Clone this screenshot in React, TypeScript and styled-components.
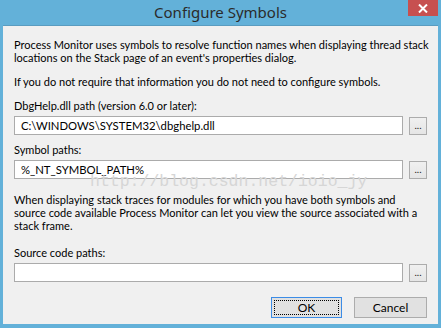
import React from 'react';
import styled, { createGlobalStyle } from 'styled-components';

const GlobalStyle = createGlobalStyle`
  html, body {
    margin: 0;
    padding: 0;
    background: #63b1d9;
  }
`;

const Window = styled.div`
  position: relative;
  width: 441px;
  height: 328px;
  background: #63b1d9;
  display: flex;
  flex-direction: column;
  box-sizing: border-box;
  font-family: "Lato", "Noto Sans", sans-serif;
  overflow: hidden;
`;

const TitleBar = styled.div`
  height: 25px;
  display: grid;
  grid-template-columns: 1fr auto 1fr;
  flex-shrink: 0;
`;

const Title = styled.div`
  grid-column: 2;
  font-family: "Noto Sans", sans-serif;
  font-size: 15px;
  color: #2b2b2b;
  line-height: 24px;
`;

const CloseButton = styled.div`
  grid-column: 3;
  justify-self: end;
  align-self: start;
  width: 30px;
  height: 16px;
  margin-right: 3px;
  background: #c75050;
  display: flex;
  align-items: center;
  justify-content: center;
`;

const Client = styled.div`
  flex: 1;
  margin: 0 3px 4px 3px;
  background: #f0f0f0;
  border-top: 1px solid #5a9cc0;
  padding: 12px 11px 0 11px;
  display: flex;
  flex-direction: column;
  font-size: 11px;
  line-height: 13px;
  color: #000;
`;

const Para = styled.p<{ $gap?: number }>`
  margin: 0 0 ${p => p.$gap ?? 11}px 0;
  white-space: nowrap;
`;

const Label = styled.div`
  margin-bottom: 4px;
`;

const Row = styled.div<{ $gap?: number }>`
  display: flex;
  align-items: center;
  gap: 6px;
  margin-bottom: ${p => p.$gap ?? 8}px;
`;

const PathInput = styled.div`
  flex: 1;
  height: 19px;
  box-sizing: border-box;
  border: 1px solid #ababab;
  background: #fff;
  padding: 0 6px;
  line-height: 17px;
  font-size: 11.3px;
`;

const BrowseButton = styled.div`
  width: 18px;
  height: 18px;
  box-sizing: border-box;
  border: 1px solid #acacac;
  background: linear-gradient(#f0f0f0, #e5e5e5);
  font-size: 10px;
  line-height: 14px;
  text-align: center;
  color: #1a1a1a;
`;

const ButtonBar = styled.div`
  display: flex;
  justify-content: flex-end;
  gap: 12px;
  margin-top: 15px;
`;

const DialogButton = styled.div<{ $default?: boolean }>`
  width: ${p => (p.$default ? 71 : 73)}px;
  height: 21px;
  box-sizing: border-box;
  border: 1px solid ${p => (p.$default ? '#3c8ce6' : '#acacac')};
  background: #e1e1e1;
  display: flex;
  align-items: center;
  justify-content: center;
  padding: 2px;
  font-size: 12px;
`;

const FocusRing = styled.div`
  flex: 1;
  align-self: stretch;
  border: 1px dotted #000;
  display: flex;
  align-items: center;
  justify-content: center;
`;

const Watermark = styled.div`
  position: absolute;
  left: 90px;
  top: 172px;
  font-family: "Liberation Mono", monospace;
  font-size: 16.5px;
  color: #d6d6d6;
  pointer-events: none;
  white-space: nowrap;
`;

const App: React.FC = () => {
  return (
    <>
      <GlobalStyle />
      <Window>
        <TitleBar>
          <Title>Configure Symbols</Title>
          <CloseButton>
            <svg width="10" height="9" viewBox="0 0 10 9">
              <path d="M1 0.5 L9 8.5 M9 0.5 L1 8.5" stroke="#fff" strokeWidth="2" />
            </svg>
          </CloseButton>
        </TitleBar>
        <Client>
          <Para>
            Process Monitor uses symbols to resolve function names when displaying thread stack
            <br />
            locations on the Stack page of an event's properties dialog.
          </Para>
          <Para>If you do not require that information you do not need to configure symbols.</Para>
          <Label>DbgHelp.dll path (version 6.0 or later):</Label>
          <Row>
            <PathInput>C:\WINDOWS\SYSTEM32\dbghelp.dll</PathInput>
            <BrowseButton>...</BrowseButton>
          </Row>
          <Label>Symbol paths:</Label>
          <Row $gap={14}>
            <PathInput>%_NT_SYMBOL_PATH%</PathInput>
            <BrowseButton>...</BrowseButton>
          </Row>
          <Para $gap={14}>
            When displaying stack traces for modules for which you have both symbols and
            <br />
            source code available Process Monitor can let you view the source associated with a
            <br />
            stack frame.
          </Para>
          <Label>Source code paths:</Label>
          <Row $gap={0}>
            <PathInput />
            <BrowseButton>...</BrowseButton>
          </Row>
          <ButtonBar>
            <DialogButton $default>
              <FocusRing>OK</FocusRing>
            </DialogButton>
            <DialogButton>Cancel</DialogButton>
          </ButtonBar>
        </Client>
        <Watermark>http://blog.csdn.net/ioio_jy</Watermark>
      </Window>
    </>
  );
};

export default App;
